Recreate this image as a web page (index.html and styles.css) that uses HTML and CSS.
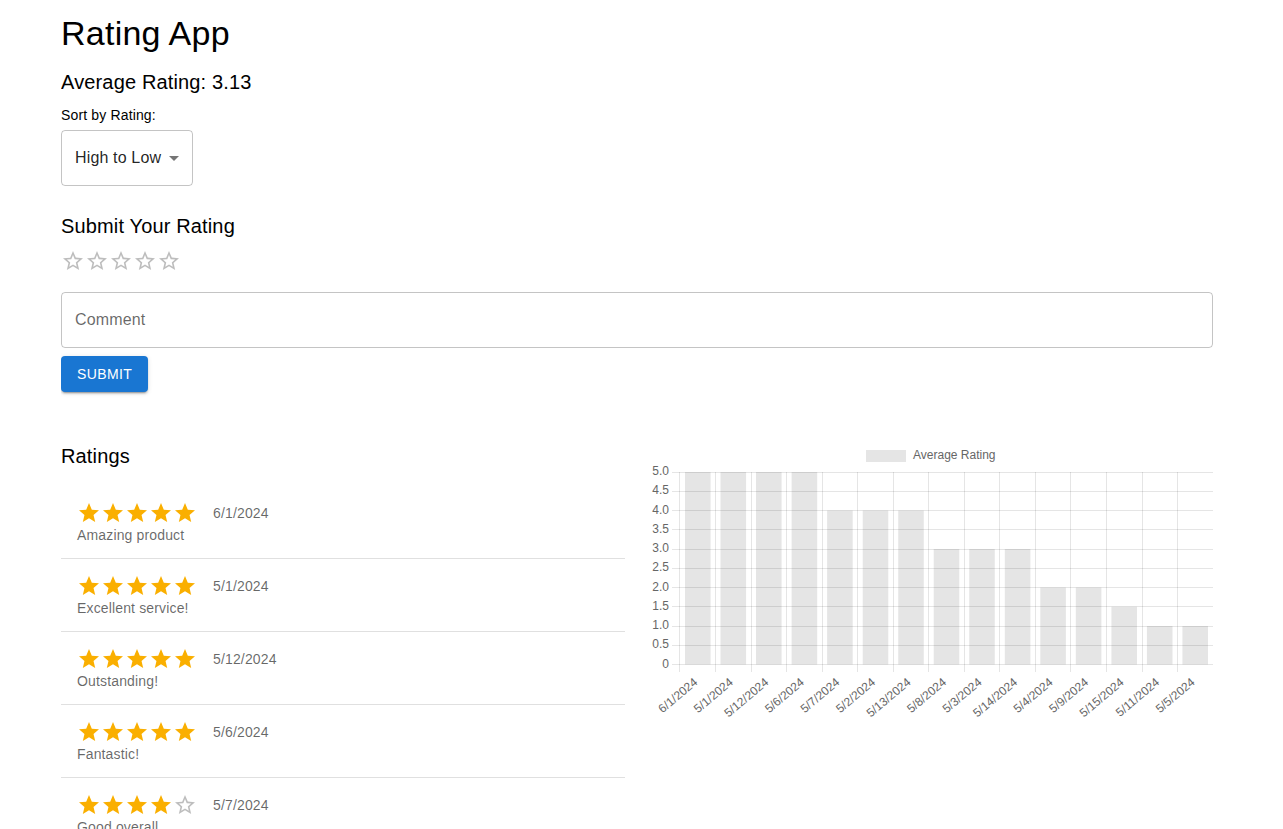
FILE: index.html
```html
<!DOCTYPE html>
<html lang="en">
<head>
<meta charset="utf-8">
<title>Rating App</title>
<link rel="stylesheet" href="styles.css">
</head>
<body>
<svg class="defs" width="0" height="0" aria-hidden="true">
  <defs>
    <symbol id="star" viewBox="0 0 24 24"><path d="M12 17.27 18.18 21l-1.64-7.03L22 9.24l-7.19-.61L12 2 9.19 8.63 2 9.24l5.46 4.73L5.82 21z"/></symbol>
    <symbol id="star-empty" viewBox="0 0 24 24"><path d="M22 9.24l-7.19-.62L12 2 9.19 8.63 2 9.24l5.46 4.73L5.82 21 12 17.27 18.18 21l-1.63-7.03L22 9.24zM12 15.4l-3.76 2.27 1-4.28-3.32-2.88 4.38-.38L12 6.1l1.71 4.04 4.38.38-3.32 2.88 1 4.28L12 15.4z"/></symbol>
  </defs>
</svg>
<div class="container">
  <h1 class="title">Rating App</h1>
  <h2 class="h6 avg">Average Rating: 3.13</h2>
  <div class="sort-label">Sort by Rating:</div>
  <div class="select">
    <span class="select-value">High to Low</span>
    <svg class="select-arrow" viewBox="0 0 24 24"><path d="M7 10l5 5 5-5z"/></svg>
  </div>

  <h2 class="h6 submit-title">Submit Your Rating</h2>
  <div class="rating rating-input">
    <svg class="star empty"><use href="#star-empty"/></svg><svg class="star empty"><use href="#star-empty"/></svg><svg class="star empty"><use href="#star-empty"/></svg><svg class="star empty"><use href="#star-empty"/></svg><svg class="star empty"><use href="#star-empty"/></svg>
  </div>
  <div class="textfield"><span class="textfield-label">Comment</span></div>
  <button class="btn">Submit</button>

  <div class="grid">
    <div class="col">
      <h2 class="h6 ratings-title">Ratings</h2>
      <ul class="list">
        <li class="item">
          <div class="item-primary">
            <span class="rating"><svg class="star full"><use href="#star"/></svg><svg class="star full"><use href="#star"/></svg><svg class="star full"><use href="#star"/></svg><svg class="star full"><use href="#star"/></svg><svg class="star full"><use href="#star"/></svg></span>
            <span class="date">6/1/2024</span>
          </div>
          <div class="item-secondary">Amazing product</div>
        </li>
        <li class="item">
          <div class="item-primary">
            <span class="rating"><svg class="star full"><use href="#star"/></svg><svg class="star full"><use href="#star"/></svg><svg class="star full"><use href="#star"/></svg><svg class="star full"><use href="#star"/></svg><svg class="star full"><use href="#star"/></svg></span>
            <span class="date">5/1/2024</span>
          </div>
          <div class="item-secondary">Excellent service!</div>
        </li>
        <li class="item">
          <div class="item-primary">
            <span class="rating"><svg class="star full"><use href="#star"/></svg><svg class="star full"><use href="#star"/></svg><svg class="star full"><use href="#star"/></svg><svg class="star full"><use href="#star"/></svg><svg class="star full"><use href="#star"/></svg></span>
            <span class="date">5/12/2024</span>
          </div>
          <div class="item-secondary">Outstanding!</div>
        </li>
        <li class="item">
          <div class="item-primary">
            <span class="rating"><svg class="star full"><use href="#star"/></svg><svg class="star full"><use href="#star"/></svg><svg class="star full"><use href="#star"/></svg><svg class="star full"><use href="#star"/></svg><svg class="star full"><use href="#star"/></svg></span>
            <span class="date">5/6/2024</span>
          </div>
          <div class="item-secondary">Fantastic!</div>
        </li>
        <li class="item">
          <div class="item-primary">
            <span class="rating"><svg class="star full"><use href="#star"/></svg><svg class="star full"><use href="#star"/></svg><svg class="star full"><use href="#star"/></svg><svg class="star full"><use href="#star"/></svg><svg class="star empty"><use href="#star-empty"/></svg></span>
            <span class="date">5/7/2024</span>
          </div>
          <div class="item-secondary">Good overall</div>
        </li>
      </ul>
    </div>
    <div class="col">
      <svg class="chart" width="564" height="282" viewBox="0 0 564 282">
        <!-- legend -->
        <rect x="217" y="10" width="40" height="12" fill="rgba(0,0,0,0.1)"/>
        <text x="264" y="16" class="lbl" dominant-baseline="middle">Average Rating</text>
        <!-- horizontal grid -->
        <g stroke="rgba(0,0,0,0.1)" stroke-width="1">
          <line x1="23" x2="564" y1="32.5" y2="32.5"/>
          <line x1="23" x2="564" y1="51.5" y2="51.5"/>
          <line x1="23" x2="564" y1="70.5" y2="70.5"/>
          <line x1="23" x2="564" y1="89.5" y2="89.5"/>
          <line x1="23" x2="564" y1="109.5" y2="109.5"/>
          <line x1="23" x2="564" y1="128.5" y2="128.5"/>
          <line x1="23" x2="564" y1="147.5" y2="147.5"/>
          <line x1="23" x2="564" y1="166.5" y2="166.5"/>
          <line x1="23" x2="564" y1="186.5" y2="186.5"/>
          <line x1="23" x2="564" y1="205.5" y2="205.5"/>
          <line x1="23" x2="564" y1="224.5" y2="224.5"/>
        </g>
        <!-- vertical grid -->
        <g stroke="rgba(0,0,0,0.1)" stroke-width="1">
          <line x1="30.5" x2="30.5" y1="32" y2="232"/>
          <line x1="66.5" x2="66.5" y1="32" y2="232"/>
          <line x1="102.5" x2="102.5" y1="32" y2="232"/>
          <line x1="137.5" x2="137.5" y1="32" y2="232"/>
          <line x1="173.5" x2="173.5" y1="32" y2="232"/>
          <line x1="208.5" x2="208.5" y1="32" y2="232"/>
          <line x1="244.5" x2="244.5" y1="32" y2="232"/>
          <line x1="279.5" x2="279.5" y1="32" y2="232"/>
          <line x1="315.5" x2="315.5" y1="32" y2="232"/>
          <line x1="350.5" x2="350.5" y1="32" y2="232"/>
          <line x1="386.5" x2="386.5" y1="32" y2="232"/>
          <line x1="421.5" x2="421.5" y1="32" y2="232"/>
          <line x1="457.5" x2="457.5" y1="32" y2="232"/>
          <line x1="493.5" x2="493.5" y1="32" y2="232"/>
          <line x1="528.5" x2="528.5" y1="32" y2="232"/>
        </g>
        <!-- bars -->
        <g fill="rgba(0,0,0,0.1)">
          <rect x="36" y="32" width="25.6" height="192.5"/>
          <rect x="71.5" y="32" width="25.6" height="192.5"/>
          <rect x="107" y="32" width="25.6" height="192.5"/>
          <rect x="142.6" y="32" width="25.6" height="192.5"/>
          <rect x="178.1" y="70.5" width="25.6" height="154"/>
          <rect x="213.7" y="70.5" width="25.6" height="154"/>
          <rect x="249.2" y="70.5" width="25.6" height="154"/>
          <rect x="284.7" y="109" width="25.6" height="115.5"/>
          <rect x="320.2" y="109" width="25.6" height="115.5"/>
          <rect x="355.8" y="109" width="25.6" height="115.5"/>
          <rect x="391.3" y="147.5" width="25.6" height="77"/>
          <rect x="426.8" y="147.5" width="25.6" height="77"/>
          <rect x="462.4" y="166.75" width="25.6" height="57.75"/>
          <rect x="497.9" y="186" width="25.6" height="38.5"/>
          <rect x="533.4" y="186" width="25.6" height="38.5"/>
        </g>
        <!-- y labels -->
        <g class="lbl" text-anchor="end" dominant-baseline="middle">
          <text x="20" y="32">5.0</text>
          <text x="20" y="51.3">4.5</text>
          <text x="20" y="70.5">4.0</text>
          <text x="20" y="89.8">3.5</text>
          <text x="20" y="109">3.0</text>
          <text x="20" y="128.3">2.5</text>
          <text x="20" y="147.5">2.0</text>
          <text x="20" y="166.8">1.5</text>
          <text x="20" y="186">1.0</text>
          <text x="20" y="205.3">0.5</text>
          <text x="20" y="224.5">0</text>
        </g>
        <!-- x labels -->
        <g class="lbl" text-anchor="end" dominant-baseline="middle">
          <text transform="translate(47.3 241) rotate(-40)">6/1/2024</text>
          <text transform="translate(82.8 241) rotate(-40)">5/1/2024</text>
          <text transform="translate(118.3 241) rotate(-40)">5/12/2024</text>
          <text transform="translate(153.9 241) rotate(-40)">5/6/2024</text>
          <text transform="translate(189.4 241) rotate(-40)">5/7/2024</text>
          <text transform="translate(225 241) rotate(-40)">5/2/2024</text>
          <text transform="translate(260.5 241) rotate(-40)">5/13/2024</text>
          <text transform="translate(296 241) rotate(-40)">5/8/2024</text>
          <text transform="translate(331.5 241) rotate(-40)">5/3/2024</text>
          <text transform="translate(367.1 241) rotate(-40)">5/14/2024</text>
          <text transform="translate(402.6 241) rotate(-40)">5/4/2024</text>
          <text transform="translate(438.1 241) rotate(-40)">5/9/2024</text>
          <text transform="translate(473.7 241) rotate(-40)">5/15/2024</text>
          <text transform="translate(509.2 241) rotate(-40)">5/11/2024</text>
          <text transform="translate(544.7 241) rotate(-40)">5/5/2024</text>
        </g>
      </svg>
    </div>
  </div>
</div>
</body>
</html>
```

FILE: styles.css
```css
* { box-sizing: border-box; }

html, body {
  margin: 0;
  padding: 0;
  background: #fff;
  color: rgba(0, 0, 0, 0.87);
  font-family: "Liberation Sans", Arial, Helvetica, sans-serif;
}

.defs { position: absolute; width: 0; height: 0; overflow: hidden; }

.container {
  width: 1152px;
  margin-left: 61px;
  padding-top: 12px;
  height: 829px;
  overflow: hidden;
}

.title {
  margin: 0 0 12px;
  font-size: 34px;
  font-weight: 400;
  line-height: 42px;
  letter-spacing: 0.25px;
  color: #000;
}

.h6 {
  margin: 0;
  font-size: 20px;
  font-weight: 400;
  line-height: 32px;
  letter-spacing: 0.15px;
  color: #000;
}

.avg { margin-bottom: 7px; }

.sort-label {
  font-size: 14px;
  line-height: 20px;
  letter-spacing: 0.15px;
  color: #000;
  margin-bottom: 5px;
}

.select {
  display: flex;
  align-items: center;
  width: 132px;
  height: 56px;
  border: 1px solid rgba(0, 0, 0, 0.23);
  border-radius: 4px;
  padding-left: 13px;
  position: relative;
}

.select-value {
  font-size: 16px;
  letter-spacing: 0.15px;
  color: rgba(0, 0, 0, 0.87);
}

.select-arrow {
  position: absolute;
  right: 6px;
  top: 15px;
  width: 24px;
  height: 24px;
  fill: rgba(0, 0, 0, 0.54);
}

.submit-title { margin-top: 24px; margin-bottom: 7px; }

.rating { display: inline-flex; }
.rating-input { display: flex; height: 24px; margin-bottom: 19px; }

.star { width: 24px; height: 24px; display: block; }
.star.full { fill: #faaf00; }
.star.empty { fill: rgba(0, 0, 0, 0.26); }

.textfield {
  height: 56px;
  border: 1px solid rgba(0, 0, 0, 0.23);
  border-radius: 4px;
  display: flex;
  align-items: center;
  padding-left: 13px;
  margin-bottom: 8px;
}

.textfield-label {
  font-size: 16px;
  letter-spacing: 0.15px;
  color: rgba(0, 0, 0, 0.6);
}

.btn {
  display: block;
  height: 36px;
  padding: 0 16px;
  border: 0;
  border-radius: 4px;
  background: #1976d2;
  color: #fff;
  font-family: inherit;
  font-size: 14px;
  letter-spacing: 0.4px;
  text-transform: uppercase;
  box-shadow: 0 3px 1px -2px rgba(0, 0, 0, 0.2), 0 2px 2px 0 rgba(0, 0, 0, 0.14), 0 1px 5px 0 rgba(0, 0, 0, 0.12);
}

.grid {
  display: grid;
  grid-template-columns: 564px 564px;
  column-gap: 24px;
  margin-top: 48px;
}

.ratings-title { margin-bottom: 6px; }

.list {
  list-style: none;
  margin: 0;
  padding: 8px 0 0;
}

.item {
  padding: 12px 16px 13px;
  border-bottom: 1px solid rgba(0, 0, 0, 0.12);
}

.item-primary {
  display: flex;
  align-items: flex-end;
  gap: 16px;
  height: 27px;
}

.date {
  font-size: 14px;
  line-height: 24px;
  letter-spacing: 0.15px;
  color: rgba(0, 0, 0, 0.6);
}

.item-secondary {
  font-size: 14px;
  line-height: 20px;
  letter-spacing: 0.15px;
  color: rgba(0, 0, 0, 0.6);
}

.chart { display: block; }

.lbl {
  font-family: "Liberation Sans", Arial, sans-serif;
  font-size: 12px;
  fill: #666;
}
```
